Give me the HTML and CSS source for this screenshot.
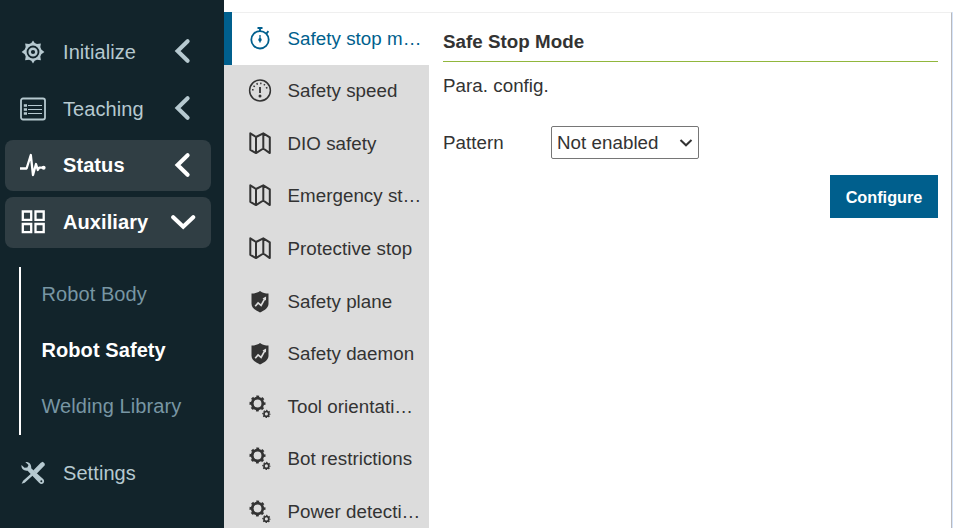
FILE: index.html
```html
<!DOCTYPE html>
<html lang="en">
<head>
<meta charset="utf-8">
<title>Robot Safety</title>
<link rel="stylesheet" href="styles.css">
</head>
<body>
<svg class="defs" aria-hidden="true">
  <defs>
    <symbol id="gear" viewBox="0 0 24 24"><path d="M10.300 3 12 .6l1.700 2.400 2.300 1 3.900-.6-.6 3.600 1 2.500L23.400 12l-3.100 2.200-1 2.400.6 3.700-3.900-.6-2.300 1L12 23.400l-1.700-2.700-2.300-1-3.900.6.6-3.700-1-2.400L.6 12l3.100-2.500 1-2.500-.6-3.600 3.900.6z" fill="currentColor"/><circle cx="12" cy="12" r="5.500" fill="none" stroke="#12242b" stroke-width="1.800"/><circle cx="12" cy="12" r="2.100" fill="#12242b"/></symbol>
    <symbol id="list" viewBox="0 0 26 24"><g fill="none" stroke="currentColor"><rect x="1" y="1.500" width="24" height="21" rx="2" stroke-width="1.800"/><path d="M8 8.500H22M8 12.500H22M8 16.500H22" stroke-width="1"/><path d="M3.800 8.500H7M3.800 12.500H7M3.800 16.500H7" stroke-width="2.600"/></g></symbol>
    <symbol id="pulse" viewBox="0 0 26 24"><path d="M0 15.500h6.600L10.800 2l2.200 20 3-11 1.800 6 1.400-2.300h4.200" fill="none" stroke="currentColor" stroke-width="2.300" stroke-linejoin="round"/><circle cx="23.600" cy="14.800" r="2" fill="currentColor"/></symbol>
    <symbol id="grid" viewBox="0 0 24 24"><path d="M1.800 1.500h8.400v8.400H1.800zM14.500 1.500h8.200v8.400h-8.200zM1.800 14h8.400v8.200H1.800zM14.500 14h8.200v8.200h-8.200z" fill="none" stroke="currentColor" stroke-width="2.300"/></symbol>
    <symbol id="tools" viewBox="0 0 24 24"><path d="m.6 22.800 1.500-3 9.500-8.600 1.800 1.800-9.700 8.800zM12.200 9.600l7.600-7.800 2-1 2 2v1.500l-8.200 8.400z" fill="currentColor"/><path d="M4.300.9 7.500 4 6.300 6.400 3.500 6.700.5 4C0 7.500 2.600 10.300 6.600 9.700l11.700 12.400c2.800 2.400 6.400-.8 4.100-3.800L10.200 7.200C10.600 3.200 8.300.6 4.300.9z" fill="currentColor"/><circle cx="20.300" cy="20.200" r="1" fill="#12242b"/></symbol>
    <symbol id="left" viewBox="0 0 26 26"><path d="M17.600 3.200 7.600 13l10 9.800" fill="none" stroke="currentColor" stroke-width="4.100" stroke-linecap="round"/></symbol>
    <symbol id="down" viewBox="0 0 26 26"><path d="m3.200 8.200 10 9.500 10-9.500" fill="none" stroke="currentColor" stroke-width="4.100" stroke-linecap="round"/></symbol>
    <symbol id="timer" viewBox="0 0 24 24"><g fill="none" stroke="currentColor" stroke-width="1.800"><circle cx="12" cy="13.800" r="8.700"/><path d="M9.500 2h5M12 2v3M18.400 7.600l2-2.400"/><path d="M12 9v7.500" stroke-width="1.300"/></g><circle cx="12" cy="13.700" r="1.700" fill="currentColor"/></symbol>
    <symbol id="gauge" viewBox="0 0 24 24"><g fill="none" stroke="currentColor"><circle cx="12" cy="11.500" r="10.400" stroke-width="1.500"/><path d="M4.800 11.500a7.200 7.200 0 0 1 14.400 0" stroke-width="1.700" stroke-dasharray="1.400 2.400"/><path d="M12 8v6" stroke-width="1.800"/></g><circle cx="12" cy="17.100" r="1.500" fill="currentColor"/></symbol>
    <symbol id="map" viewBox="0 0 24 24"><path d="M2.300 1.300 8 5l7.300-3.700 6.500 4v15.800l-6.500-4.600L8 21.100l-5.700-3.300zM8 5v16.100M15.300 1.300v15.200" fill="none" stroke="currentColor" stroke-width="2" stroke-linejoin="round"/></symbol>
    <symbol id="shield" viewBox="0 0 24 24"><path d="M12 1c2.600 2 5.300 2.400 8.500 2.600v10.200c0 4.200-4.100 6.600-8.500 8.700-4.400-2.100-8.500-4.500-8.500-8.700V3.600C6.700 3.400 9.400 3 12 1z" fill="currentColor"/><path d="m7.200 16.200 2.900-3.300 3 2.500 4-7.300" fill="none" stroke="#dcdcdc" stroke-width="1.700"/><path d="m14.500 8.400 3.600-1.900-.1 4z" fill="#dcdcdc"/></symbol>
    <symbol id="gears" viewBox="0 0 24 24"><g fill="none" stroke="currentColor"><circle cx="9.500" cy="8.500" r="5.300" stroke-width="2.700"/><circle cx="9.500" cy="8.500" r="7" stroke-width="2" stroke-dasharray="2.800 2.700" stroke-dashoffset="1.400"/><circle cx="18.400" cy="18.900" r="2.400" stroke-width="1.700"/><circle cx="18.400" cy="18.900" r="3.500" stroke-width="1.300" stroke-dasharray="1.400 1.350" stroke-dashoffset=".7"/></g></symbol>
  </defs>
</svg>
<div class="app">
  <nav class="sidebar">
    <a class="nav-item"><svg class="nav-icon"><use href="#gear"/></svg><span class="nav-label">Initialize</span><svg class="chevron"><use href="#left"/></svg></a>
    <a class="nav-item"><svg class="nav-icon wide"><use href="#list"/></svg><span class="nav-label">Teaching</span><svg class="chevron"><use href="#left"/></svg></a>
    <a class="nav-item open"><svg class="nav-icon wide"><use href="#pulse"/></svg><span class="nav-label">Status</span><svg class="chevron"><use href="#left"/></svg></a>
    <a class="nav-item open"><svg class="nav-icon"><use href="#grid"/></svg><span class="nav-label">Auxiliary</span><svg class="chevron"><use href="#down"/></svg></a>
    <div class="submenu">
      <a class="sub-item">Robot Body</a>
      <a class="sub-item current">Robot Safety</a>
      <a class="sub-item">Welding Library</a>
    </div>
    <a class="nav-item"><svg class="nav-icon"><use href="#tools"/></svg><span class="nav-label">Settings</span></a>
  </nav>
  <div class="workspace">
    <aside class="tabs">
      <a class="tab selected"><svg class="tab-icon"><use href="#timer"/></svg><span class="tab-label">Safety stop m…</span></a>
      <a class="tab"><svg class="tab-icon"><use href="#gauge"/></svg><span class="tab-label">Safety speed</span></a>
      <a class="tab"><svg class="tab-icon"><use href="#map"/></svg><span class="tab-label">DIO safety</span></a>
      <a class="tab"><svg class="tab-icon"><use href="#map"/></svg><span class="tab-label">Emergency st…</span></a>
      <a class="tab"><svg class="tab-icon"><use href="#map"/></svg><span class="tab-label">Protective stop</span></a>
      <a class="tab"><svg class="tab-icon"><use href="#shield"/></svg><span class="tab-label">Safety plane</span></a>
      <a class="tab"><svg class="tab-icon"><use href="#shield"/></svg><span class="tab-label">Safety daemon</span></a>
      <a class="tab"><svg class="tab-icon"><use href="#gears"/></svg><span class="tab-label">Tool orientati…</span></a>
      <a class="tab"><svg class="tab-icon"><use href="#gears"/></svg><span class="tab-label">Bot restrictions</span></a>
      <a class="tab"><svg class="tab-icon"><use href="#gears"/></svg><span class="tab-label">Power detecti…</span></a>
    </aside>
    <main class="panel">
      <h1 class="title">Safe Stop Mode</h1>
      <p class="subtitle">Para. config.</p>
      <div class="field">
        <label class="field-label" for="pattern">Pattern</label>
        <span class="select-wrap"><select class="select" id="pattern"><option>Not enabled</option></select><svg class="select-arrow" viewBox="0 0 14 10"><path d="m1.500 2 5.500 5.300L12.500 2" fill="none" stroke="currentColor" stroke-width="2"/></svg></span>
      </div>
      <button class="configure">Configure</button>
    </main>
  </div>
</div>
</body>
</html>
```
FILE: styles.css
```css
* { box-sizing: border-box; }
body {
  margin: 0;
  height: 528px;
  overflow: hidden;
  font-family: "Liberation Sans", Arial, sans-serif;
  background: #fff;
  color: #333;
}
.defs { position: absolute; width: 0; height: 0; }
.app { display: flex; height: 528px; }

.sidebar {
  width: 224px;
  flex: none;
  padding: 26px 13px 0 5px;
  background: #12242b;
  font-size: 20px;
  letter-spacing: 0.08px;
}
.nav-item {
  display: flex;
  align-items: center;
  height: 51px;
  margin-bottom: 6px;
  padding: 0 15px;
  border-radius: 8px;
  color: #b6c9d0;
}
.nav-item.open { background: #303e44; color: #fff; font-weight: bold; }
.nav-icon { flex: none; width: 24px; height: 24px; margin: 0 19px 0 1px; }
.nav-icon.wide { width: 26px; margin: 0 18px 0 0; }
.nav-label { flex: 1; margin-left: -1px; padding-top: 2px; }
.nav-item.open .nav-label { padding-top: 0; padding-bottom: 1px; }
.nav-item.open .nav-icon { margin-bottom: 1px; }
.chevron { width: 26px; height: 26px; margin-bottom: 1px; }
.submenu {
  margin: 19px 0 12px 14px;
  border-left: 2px solid #fff;
  padding-left: 20.5px;
}
.sub-item {
  display: flex;
  align-items: center;
  height: 56px;
  padding-bottom: 1px;
  color: #7896a3;
}
.sub-item.current { color: #fff; font-weight: bold; }

.workspace {
  flex: 1;
  min-width: 0;
  display: flex;
  margin-top: 12px;
  border-right: 1px solid #d6e5fa;
}
.tabs { width: 205px; flex: none; background: #dcdcdc; overflow: hidden; }
.tab {
  display: flex;
  align-items: center;
  height: 52.65px;
  padding: 0 7px 0 24px;
  font-size: 18.75px;
  letter-spacing: 0.04px;
}
.tab.selected {
  border-left: 8px solid #005f8d;
  padding-left: 16px;
  background: #fff;
  box-shadow: inset 0 1px #efefef;
  color: #005f8d;
}
.tab.selected .tab-label { padding-top: 1px; }
.tab-icon { flex: none; width: 24px; height: 24px; margin-right: 15.5px; }
.tab-label { flex: 1; white-space: nowrap; }

.panel {
  flex: 1;
  min-width: 0;
  padding: 15px 13px 0 14px;
  border-top: 1px solid #efefef;
  border-right: 1px solid #b9b9bd;
  font-size: 18.75px;
  letter-spacing: 0.04px;
}
.title {
  margin: 0;
  height: 34px;
  line-height: 27px;
  font-size: 18.75px;
  border-bottom: 1px solid #91b73d;
}
.subtitle { margin: 13px 0 0; line-height: 22px; }
.field { display: flex; align-items: center; margin-top: 29px; height: 33px; }
.field-label { width: 108px; }
.select-wrap { position: relative; display: flex; width: 148px; height: 33px; }
.select {
  appearance: none;
  width: 100%;
  padding: 0 5px;
  border: 1px solid #767676;
  border-radius: 2px;
  background: #fff;
  color: #333;
  font: 18.75px "Liberation Sans", Arial, sans-serif;
  letter-spacing: 0.04px;
}
.select-arrow { position: absolute; right: 6px; top: 12px; width: 14px; height: 10px; pointer-events: none; }
.configure {
  display: block;
  width: 108px;
  height: 43px;
  margin: 16px 0 0 auto;
  padding: 1px 0 0;
  border: 0;
  background: #005f8d;
  color: #fff;
  font: bold 16.25px "Liberation Sans", Arial, sans-serif;
}
```
